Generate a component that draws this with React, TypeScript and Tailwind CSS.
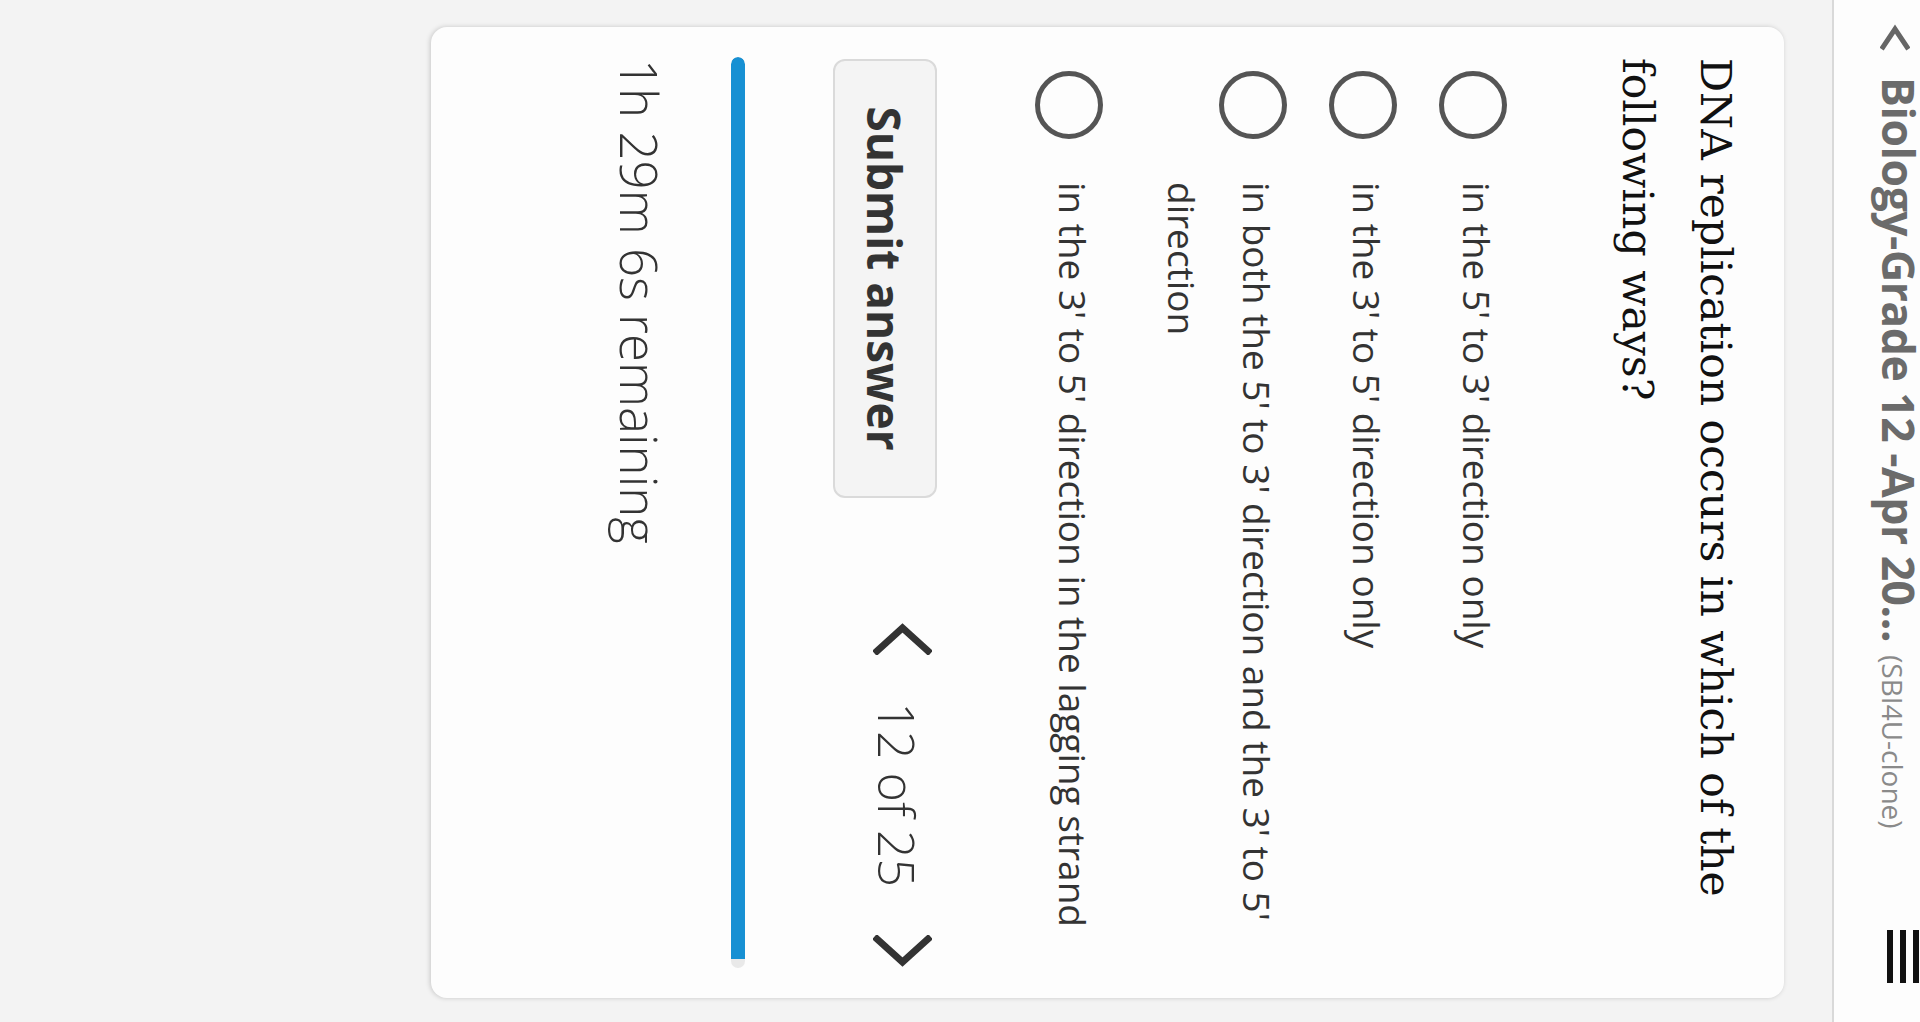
const options = [
  "in the 5' to 3' direction only",
  "in the 3' to 5' direction only",
  "in both the 5' to 3' direction and the 3' to 5' direction",
  "in the 3' to 5' direction in the lagging strand",
]

function Chevron({ dir, className }: { dir: 'left' | 'right'; className?: string }) {
  const points = dir === 'left' ? '28,4 5,29.5 28,55' : '4,4 27,29.5 4,55'
  return (
    <svg viewBox="0 0 32 59" className={className} fill="none">
      <polyline points={points} stroke="#333" strokeWidth="7" strokeLinecap="square" strokeLinejoin="miter" />
    </svg>
  )
}

export default function App() {
  return (
    <div className="w-[1920px] h-[1022px] overflow-hidden bg-[#f3f3f3]">
      {/* the phone screen, turned on its side */}
      <div className="w-[1022px] h-[1920px] origin-top-left translate-x-[1920px] rotate-90 flex flex-col font-['Open_Sans',sans-serif]">
        {/* Header */}
        <header className="h-[88px] shrink-0 bg-[#fdfdfd] border-b-2 border-[#d9d9d9] flex items-start overflow-hidden">
          <svg viewBox="0 0 28 30" className="w-[28px] h-[30px] mt-[10px] ml-[23px]" fill="none">
            <polyline points="24,3 6,15 24,27" stroke="#666" strokeWidth="5" strokeLinecap="square" />
          </svg>
          <div className="ml-[26px] -mt-[2px] flex items-baseline whitespace-nowrap">
            <span className="text-[44.5px] leading-[45px] tracking-[-0.5px] font-bold text-[#6b6b6b]">Biology-Grade 12 -Apr 20...</span>
            <span className="ml-[13px] text-[28px] text-[#8a8a8a]">(SBI4U-clone)</span>
          </div>
          <div className="ml-auto mr-[39px] mt-[1px] flex flex-col gap-[7px]">
            <div className="w-[53px] h-[6px] bg-[#111]" />
            <div className="w-[53px] h-[6px] bg-[#111]" />
            <div className="w-[53px] h-[6px] bg-[#111]" />
          </div>
        </header>

        {/* Question card */}
        <main className="pt-[48px] pl-[27px] pr-[24px]">
          <div className="h-[1353px] bg-[#fdfdfd] rounded-[16px] shadow-[0_1px_5px_rgba(0,0,0,0.18)] px-[31px] pt-[30px] flex flex-col">
            <p className="font-['DejaVu_Serif',serif] text-[42.5px] leading-[78px] text-[#111]">
              DNA replication occurs in which of the following ways?
            </p>

            <div className="mt-[83px] ml-[13px] flex flex-col gap-[34px]">
              {options.map((o) => (
                <label key={o} className="flex items-start">
                  <span className="mt-[8px] w-[68px] h-[68px] shrink-0 rounded-full border-[5px] border-[#555]" />
                  <span className="ml-[43px] text-[37px] leading-[75px] text-[#333]">{o}</span>
                </label>
              ))}
            </div>

            <div className="mt-[98px] flex items-start">
              <button className="ml-[1px] w-[439px] h-[104px] rounded-[12px] border-2 border-[#dadada] bg-[#f4f4f4] flex items-center justify-center text-[46px] leading-[46px] font-bold text-[#333]">
                Submit answer
              </button>
              <div className="ml-auto flex items-start">
                <Chevron dir="left" className="w-[32px] h-[59px] mt-[5px]" />
                <span className="mx-[48px] mt-[15px] text-[50px] leading-[50px] font-light text-[#333] whitespace-nowrap">12 of 25</span>
                <Chevron dir="right" className="w-[32px] h-[59px] mt-[5px]" />
              </div>
            </div>

            <div className="mt-[88px] -mx-[1px] h-[14px] rounded-full bg-[#e9e9e9] overflow-hidden">
              <div className="h-full w-[99%] rounded-l-full bg-[#1790d3]" />
            </div>

            <p className="mt-[66px] ml-[1px] text-[51px] leading-[51px] font-light text-[#333]">1h 29m 6s remaining</p>
          </div>
        </main>
      </div>
    </div>
  )
}
